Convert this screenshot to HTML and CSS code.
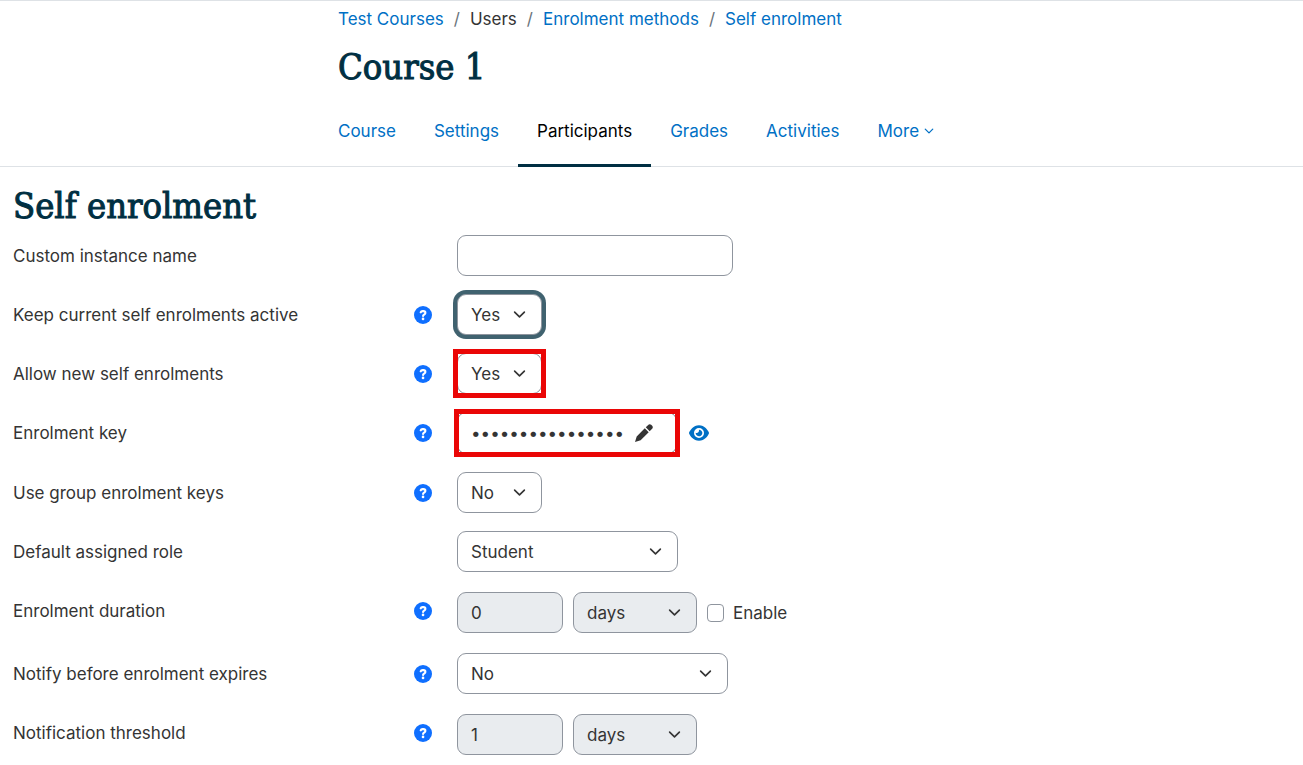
FILE: index.html
```html
<!DOCTYPE html>
<html lang="en">
<head>
<meta charset="utf-8">
<meta name="viewport" content="width=device-width, initial-scale=1">
<title>Self enrolment</title>
<link rel="stylesheet" href="styles.css">
</head>
<body>
<svg class="sprite" aria-hidden="true">
  <symbol id="question" viewBox="0 0 512 512"><circle cx="256" cy="256" r="256" fill="#0f6fff"/><path fill="none" stroke="#fff" stroke-width="60" stroke-linecap="round" stroke-linejoin="round" d="M190 180c8-24 28-34 54-34h24c32 0 56 24 56 52 0 44-66 50-66 88"/><circle cx="257" cy="368" r="38" fill="#fff"/></symbol>
  <symbol id="chevron" viewBox="0 0 16 16"><path fill="none" stroke="currentColor" stroke-width="2" stroke-linecap="round" stroke-linejoin="round" d="m2 5 6 6 6-6"/></symbol>
  <symbol id="pencil" viewBox="0 0 512 512"><path fill="currentColor" d="M278 122 390 234 160 464 0 512 48 352zM306 94l62-62c30-34 66-34 92-8l28 28c26 26 26 62-8 92l-62 62z"/></symbol>
  <symbol id="eye" viewBox="0 0 576 512"><path fill="currentColor" d="M288 32c-80.800 0-145.500 36.800-192.600 80.600C48.600 156 17.300 208 2.500 243.700c-3.300 7.900-3.300 16.700 0 24.600C17.300 304 48.600 356 95.400 399.400C142.500 443.200 207.200 480 288 480s145.500-36.800 192.600-80.600c46.800-43.500 78.100-95.400 93-131.100c3.300-7.900 3.300-16.700 0-24.600c-14.900-35.700-46.200-87.700-93-131.100C433.500 68.800 368.800 32 288 32zM144 256a144 144 0 1 1 288 0 144 144 0 1 1-288 0zm144-64c0 35.300-28.700 64-64 64c-7.100 0-13.900-1.200-20.300-3.300c-5.500-1.800-11.900 1.600-11.700 7.400c.3 6.900 1.300 13.800 3.200 20.700c13.700 51.200 66.400 81.600 117.600 67.900s81.600-66.400 67.900-117.600c-11.100-41.500-47.800-69.400-88.600-71.100c-5.800-.2-9.200 6.100-7.400 11.700c2.100 6.400 3.300 13.200 3.300 20.300z"/></symbol>
</svg>

<header class="page-header">
  <nav aria-label="Breadcrumb">
    <ol class="breadcrumb">
      <li><a href="#">Test Courses</a></li>
      <li>Users</li>
      <li><a href="#">Enrolment methods</a></li>
      <li><a href="#">Self enrolment</a></li>
    </ol>
  </nav>
  <h1 class="title">Course 1</h1>
  <nav class="tabs" aria-label="Course">
    <a class="tab" href="#">Course</a>
    <a class="tab" href="#">Settings</a>
    <a class="tab tab-active" href="#" aria-current="page">Participants</a>
    <a class="tab" href="#">Grades</a>
    <a class="tab" href="#">Activities</a>
    <a class="tab" href="#">More <svg class="tab-chevron" aria-hidden="true"><use href="#chevron"/></svg></a>
  </nav>
</header>

<main class="content">
  <h2 class="title">Self enrolment</h2>
  <form class="form">
    <div class="row">
      <label for="name">Custom instance name</label>
      <div class="controls"><input class="field field-name" id="name" type="text"></div>
    </div>
    <div class="row">
      <label for="keep">Keep current self enrolments active</label>
      <button class="help" type="button" aria-label="Help"><svg><use href="#question"/></svg></button>
      <div class="controls"><span class="select select-short select-focus"><select class="field" id="keep"><option>Yes</option><option>No</option></select><svg><use href="#chevron"/></svg></span></div>
    </div>
    <div class="row">
      <label for="allow">Allow new self enrolments</label>
      <button class="help" type="button" aria-label="Help"><svg><use href="#question"/></svg></button>
      <div class="controls"><span class="select select-short marked"><select class="field" id="allow"><option>Yes</option><option>No</option></select><svg><use href="#chevron"/></svg></span></div>
    </div>
    <div class="row">
      <label for="key">Enrolment key</label>
      <button class="help" type="button" aria-label="Help"><svg><use href="#question"/></svg></button>
      <div class="controls controls-key">
        <div class="field key marked">
          <input class="key-input" id="key" type="password" value="0123456789abcdef">
          <button class="icon-button" type="button" aria-label="Edit"><svg class="pencil"><use href="#pencil"/></svg></button>
        </div>
        <button class="icon-button" type="button" aria-label="Reveal"><svg class="eye"><use href="#eye"/></svg></button>
      </div>
    </div>
    <div class="row">
      <label for="group">Use group enrolment keys</label>
      <button class="help" type="button" aria-label="Help"><svg><use href="#question"/></svg></button>
      <div class="controls"><span class="select select-short"><select class="field" id="group"><option>No</option><option>Yes</option></select><svg><use href="#chevron"/></svg></span></div>
    </div>
    <div class="row">
      <label for="role">Default assigned role</label>
      <div class="controls"><span class="select select-role"><select class="field" id="role"><option>Student</option></select><svg><use href="#chevron"/></svg></span></div>
    </div>
    <div class="row">
      <label for="duration">Enrolment duration</label>
      <button class="help" type="button" aria-label="Help"><svg><use href="#question"/></svg></button>
      <div class="controls controls-group">
        <input class="field field-number" id="duration" type="text" value="0" disabled>
        <span class="select select-unit"><select class="field" aria-label="Duration unit" disabled><option>days</option></select><svg><use href="#chevron"/></svg></span>
        <label class="check"><input type="checkbox">Enable</label>
      </div>
    </div>
    <div class="row">
      <label for="notify">Notify before enrolment expires</label>
      <button class="help" type="button" aria-label="Help"><svg><use href="#question"/></svg></button>
      <div class="controls"><span class="select select-notify"><select class="field" id="notify"><option>No</option></select><svg><use href="#chevron"/></svg></span></div>
    </div>
    <div class="row">
      <label for="threshold">Notification threshold</label>
      <button class="help" type="button" aria-label="Help"><svg><use href="#question"/></svg></button>
      <div class="controls controls-group">
        <input class="field field-number" id="threshold" type="text" value="1" disabled>
        <span class="select select-unit"><select class="field" aria-label="Threshold unit" disabled><option>days</option></select><svg><use href="#chevron"/></svg></span>
      </div>
    </div>
  </form>
</main>
</body>
</html>
```
FILE: styles.css
```css
* { box-sizing: border-box; }

body {
  margin: 0;
  background: #fff;
  color: #343434;
  font: 17px/26px Inter, "Liberation Sans", sans-serif;
}

a { color: #0070c5; text-decoration: none; }

svg { display: block; }

.sprite { position: absolute; width: 0; height: 0; }

.page-header {
  padding: 5px 0 0 319px;
  border-top: 1px solid #dee2e6;
  border-bottom: 1px solid #dee2e6;
}

.breadcrumb {
  display: flex;
  flex-wrap: wrap;
  margin: 0;
  padding: 0 19px;
  list-style: none;
}

.breadcrumb li + li::before {
  content: "/";
  padding: 0 10px;
  color: #6a737b;
}

.title {
  margin: 0;
  color: #002f42;
  font: 500 36px/44px "Roboto Slab", "DejaVu Serif Condensed", "DejaVu Serif", serif;
  -webkit-text-stroke: 1px #002f42;
}

.page-header .title { padding: 13px 19px 9px; }

.tabs { display: flex; flex-wrap: wrap; }

.tab {
  display: flex;
  align-items: center;
  gap: 5px;
  height: 69px;
  padding: 0 19px;
  margin-bottom: -1px;
  border-bottom: 3px solid transparent;
}

.tab-active { color: #000; border-color: #002f42; }

.tab-chevron { width: 10px; height: 10px; }

.content { padding: 17px 13px 10px; }

.form {
  display: grid;
  gap: 18px;
  margin-top: 7px;
}

.row {
  display: grid;
  grid-template-columns: 401px 18px 1fr;
  align-items: start;
}

.row > label { padding: 8px 0 7px; }

.help {
  height: 18px;
  margin-top: 12px;
  padding: 0;
  border: 0;
  background: none;
}

.help svg { width: 18px; height: 18px; }

.controls {
  grid-column: 3;
  display: flex;
  align-items: center;
  gap: 10px;
  padding-left: 25px;
}

.controls-key { gap: 12px; }

.controls-group { padding-top: 2px; padding-bottom: 2px; }

.field {
  height: 41px;
  padding: 0 13px;
  border: 1px solid #8f959e;
  border-radius: 9px;
  background: #fff;
  color: #343434;
  font: inherit;
}

.field:disabled { background: #e9ecef; opacity: 1; }

.field-name { width: 276px; }
.field-number { width: 106px; }

.select { position: relative; display: block; }

.select .field { display: block; width: 100%; appearance: none; }

.select svg {
  position: absolute;
  top: 14px;
  right: 16px;
  width: 13px;
  height: 13px;
  pointer-events: none;
}

.select-short { width: 85px; }
.select-role { width: 221px; }
.select-unit { width: 124px; }
.select-notify { width: 271px; }

.select-focus .field { outline: 0; box-shadow: 0 0 0 4px #40626f; }

.marked { position: relative; }

.marked::after {
  content: "";
  position: absolute;
  inset: -4px;
  border: 5px solid #ea0606;
  pointer-events: none;
}

.key {
  display: flex;
  align-items: center;
  gap: 7px;
  width: 220px;
  height: 42px;
}

.key-input {
  width: 157px;
  padding: 0;
  border: 0;
  outline: 0;
  background: none;
  color: inherit;
  font: inherit;
}

.icon-button {
  padding: 0;
  border: 0;
  background: none;
  color: #0070c5;
}

.pencil { width: 18px; height: 18px; color: #343434; }
.eye { width: 20px; height: 18px; }

.check { display: flex; align-items: center; gap: 9px; }

.check input {
  width: 17px;
  height: 18px;
  margin: 0;
  border: 1px solid #8f959e;
  border-radius: 4px;
  background: #fff;
  appearance: none;
}
```
